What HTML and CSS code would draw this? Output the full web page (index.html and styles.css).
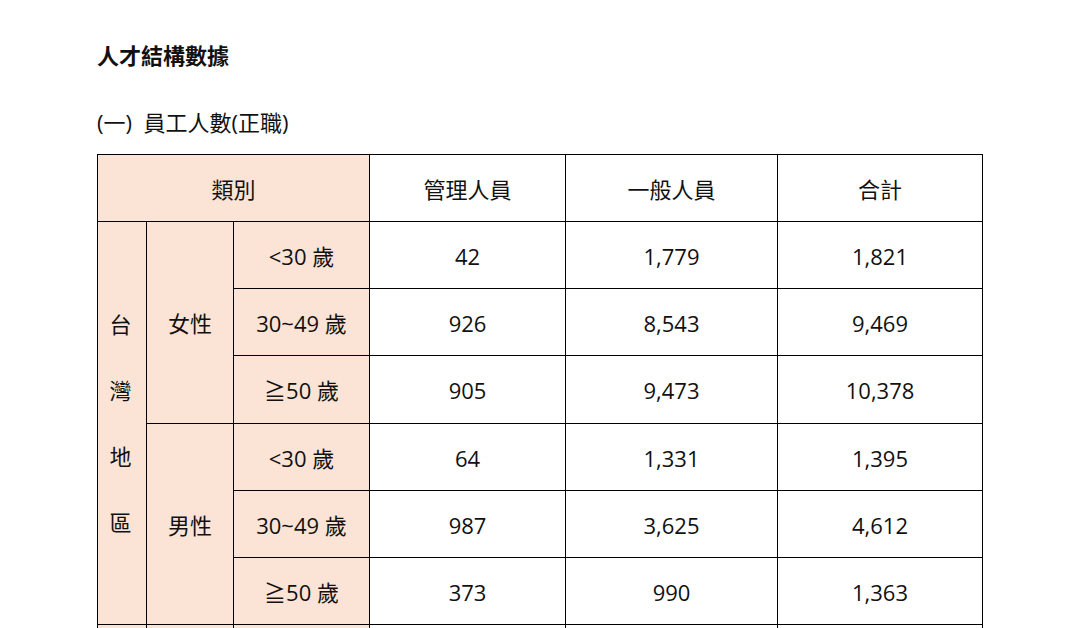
FILE: index.html
```html
<!DOCTYPE html>
<html lang="zh-Hant">
<head>
<meta charset="utf-8">
<title>人才結構數據</title>
<link rel="stylesheet" href="styles.css">
</head>
<body>
<main class="page">
  <h1 class="title">人才結構數據</h1>
  <h2 class="subtitle">(一)&nbsp; 員工人數(正職)</h2>
  <table class="data">
    <colgroup>
      <col class="c1"><col class="c2"><col class="c3"><col class="c4"><col class="c5"><col class="c6">
    </colgroup>
    <tr>
      <td class="shade" colspan="3">類別</td>
      <td>管理人員</td>
      <td>一般人員</td>
      <td>合計</td>
    </tr>
    <tr>
      <td class="shade region" rowspan="6">台<br>灣<br>地<br>區</td>
      <td class="shade" rowspan="3">女性</td>
      <td class="shade">&lt;30 歲</td>
      <td>42</td><td>1,779</td><td>1,821</td>
    </tr>
    <tr>
      <td class="shade">30~49 歲</td>
      <td>926</td><td>8,543</td><td>9,469</td>
    </tr>
    <tr>
      <td class="shade">≧50 歲</td>
      <td>905</td><td>9,473</td><td>10,378</td>
    </tr>
    <tr>
      <td class="shade" rowspan="3">男性</td>
      <td class="shade">&lt;30 歲</td>
      <td>64</td><td>1,331</td><td>1,395</td>
    </tr>
    <tr>
      <td class="shade">30~49 歲</td>
      <td>987</td><td>3,625</td><td>4,612</td>
    </tr>
    <tr>
      <td class="shade">≧50 歲</td>
      <td>373</td><td>990</td><td>1,363</td>
    </tr>
    <tr>
      <td class="shade"></td>
      <td class="shade"></td>
      <td class="shade"></td>
      <td></td><td></td><td></td>
    </tr>
  </table>
</main>
</body>
</html>
```
FILE: styles.css
```css
html, body {
  margin: 0;
  padding: 0;
  background: #ffffff;
}
body {
  font-family: "Open Sans", "Noto Sans CJK TC", sans-serif;
  color: #111111;
  overflow: hidden;
  height: 628px;
}
.page {
  padding: 39px 0 0 97px;
}
.title {
  margin: 0;
  font-size: 22px;
  font-weight: 700;
  line-height: 32px;
}
.subtitle {
  margin: 35px 0 0 0;
  font-size: 22px;
  font-weight: 400;
  line-height: 32px;
}
.data {
  margin-top: 16px;
  border-collapse: collapse;
  table-layout: fixed;
  width: 886px;
  font-size: 22px;
}
.c1 { width: 49px; }
.c2 { width: 87px; }
.c3 { width: 136px; }
.c4 { width: 196px; }
.c5 { width: 212px; }
.c6 { width: 205px; }
.data td {
  border: 1.3px solid #000;
  height: 67.15px;
  padding: 2px 0 0 0;
  box-sizing: border-box;
  text-align: center;
  vertical-align: middle;
  line-height: 30px;
}
.data td.shade {
  background: #fbe4d5;
}
.data td.region {
  line-height: 66px;
  padding: 0 3px 0 0;
}
```
